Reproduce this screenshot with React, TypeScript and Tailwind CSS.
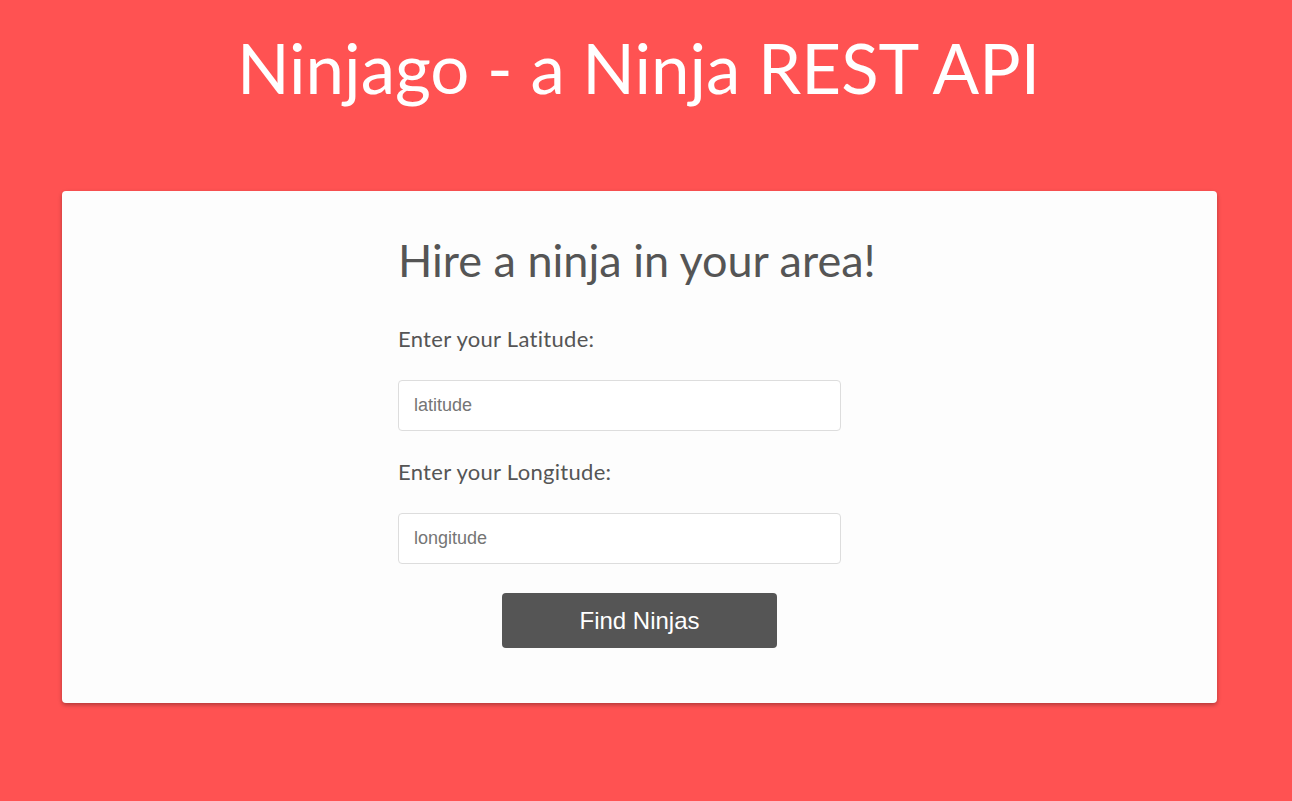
export default function App() {
    return (
        <div className="min-h-[801px] bg-[#ff5252] pb-24" style={{ fontFamily: "Lato, 'Open Sans', sans-serif" }}>
            <h1 className="w-[1277px] pt-[23px] text-center text-[69px] font-normal leading-[90px] text-white">
                Ninjago - a Ninja REST API
            </h1>
            <div className="ml-[62px] mt-[78px] w-[1155px] rounded bg-[#fdfdfd] pt-[34px] pb-[55px] shadow-[0_2px_4px_rgba(0,0,0,0.3)]">
                <div className="ml-[336px] w-[480px]">
                    <h2 className="text-[45px] leading-[70px] text-[#555]">Hire a ninja in your area!</h2>
                    <form className="flex flex-col">
                        <label className="mt-[29px] text-[22px] leading-[30px] tracking-[0.3px] text-[#555]">Enter your Latitude:</label>
                        <input
                            type="text"
                            placeholder="latitude"
                            className="mt-[26px] h-[51px] w-[443px] rounded border border-[#ddd] bg-white px-[15px] text-[18px] placeholder:text-[#757575]"
                            style={{ fontFamily: "'Liberation Sans', Arial, sans-serif" }}
                        />
                        <label className="mt-[26px] text-[22px] leading-[30px] tracking-[0.3px] text-[#555]">Enter your Longitude:</label>
                        <input
                            type="text"
                            placeholder="longitude"
                            className="mt-[26px] h-[51px] w-[443px] rounded border border-[#ddd] bg-white px-[15px] text-[18px] placeholder:text-[#757575]"
                            style={{ fontFamily: "'Liberation Sans', Arial, sans-serif" }}
                        />
                        <button
                            type="button"
                            className="ml-[104px] mt-[29px] h-[55px] w-[275px] rounded bg-[#555] text-[24px] text-white"
                            style={{ fontFamily: "'Liberation Sans', Arial, sans-serif" }}
                        >
                            Find Ninjas
                        </button>
                    </form>
                </div>
            </div>
        </div>
    );
}
